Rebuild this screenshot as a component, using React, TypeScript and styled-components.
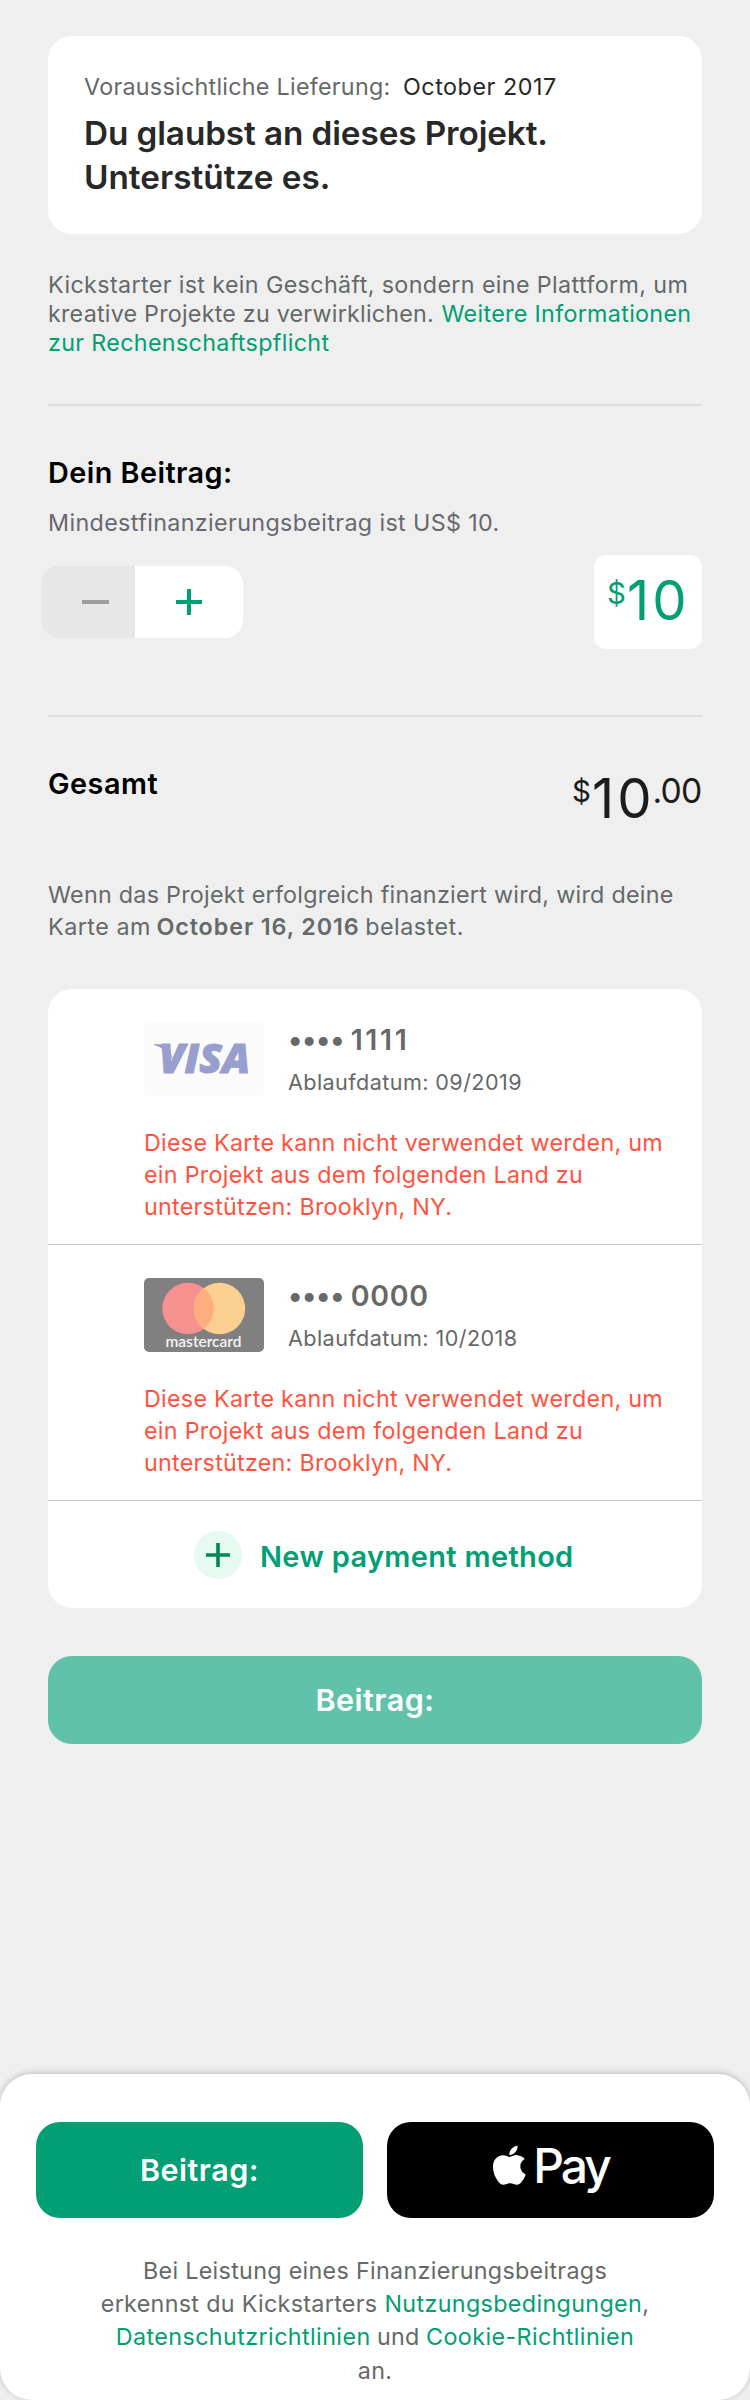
import React from 'react';
import styled, { createGlobalStyle } from 'styled-components';
import { FaApple } from 'react-icons/fa';

const color = {
  page: '#efefef',
  card: '#ffffff',
  text: '#656969',
  dark: '#282828',
  green: '#029e74',
  red: '#ff5340',
  rule: '#dcdddc',
  separator: '#c4c4c6',
};

const GlobalStyle = createGlobalStyle`
  *, *::before, *::after { box-sizing: border-box; }
  body {
    margin: 0;
    background: ${color.page};
    font-family: Inter, 'Liberation Sans', sans-serif;
    font-kerning: normal;
  }
`;

type TextProps = {
  $size?: number;
  $height?: number;
  $track?: number;
  $weight?: number;
  $color?: string;
};

const Screen = styled.div`
  width: 750px;
  height: 2400px;
  display: flex;
  flex-direction: column;
  justify-content: space-between;
  overflow: hidden;
`;

const Content = styled.main`
  padding: 36px 48px 0;
`;

const Line = styled.div<TextProps & { $center?: boolean; $gap?: number }>`
  display: flex;
  justify-content: ${(p) => (p.$center ? 'center' : 'flex-start')};
  gap: ${(p) => p.$gap ?? 0}px;
  white-space: nowrap;
  font-size: ${(p) => p.$size ?? 23.3}px;
  line-height: ${(p) => p.$height ?? 32}px;
  letter-spacing: ${(p) => p.$track ?? 0.3}px;
  font-weight: ${(p) => p.$weight ?? 400};
  color: ${(p) => p.$color ?? color.text};
`;

const Part = styled.span<{ $track?: number; $weight?: number; $color?: string }>`
  letter-spacing: ${(p) => p.$track ?? 0.3}px;
  font-weight: ${(p) => p.$weight ?? 400};
  color: ${(p) => p.$color ?? 'inherit'};
`;

const Link = styled.a<{ $track?: number }>`
  color: ${color.green};
  letter-spacing: ${(p) => p.$track ?? 0.3}px;
  text-decoration: none;
`;

const SummaryCard = styled.section`
  height: 198px;
  padding: 34px 36px 0;
  border-radius: 24px;
  background: ${color.card};
`;

const SummaryTitle = styled.h1`
  margin: 8px 0 0;
`;

const Disclaimer = styled.section`
  height: 170px;
  padding-top: 36px;
`;

const Divider = styled.hr`
  height: 2px;
  margin: 0;
  border: 0;
  background: ${color.rule};
`;

const PledgeSection = styled.section`
  height: 309px;
  padding-top: 48.5px;
`;

const Hint = styled.div`
  margin: 16px 0 16.5px;
`;

const PledgeRow = styled.div`
  display: flex;
  align-items: center;
  justify-content: space-between;
  height: 94px;
  margin-left: -7px;
`;

const Stepper = styled.div`
  display: flex;
  width: 202px;
  height: 72px;
  border-radius: 18px;
  overflow: hidden;
`;

const StepButton = styled.button<{ $off?: boolean }>`
  display: flex;
  align-items: center;
  flex: ${(p) => (p.$off ? '0 0 94px' : '1')};
  padding: 0 0 0 41px;
  border: 0;
  background: ${(p) => (p.$off ? '#e7e7e7' : color.card)};
  color: ${(p) => (p.$off ? '#9b9e9e' : color.green)};
`;

const AmountBox = styled.div`
  display: flex;
  align-items: flex-start;
  width: 108px;
  height: 94px;
  padding: 18px 0 0 13px;
  border-radius: 12px;
  background: ${color.card};
  color: ${color.green};
`;

const Currency = styled.span`
  width: 20px;
  padding-top: 5px;
  font-size: 29.5px;
  line-height: 30px;
`;

const Whole = styled.span`
  width: 60.5px;
  font-size: 54.5px;
  line-height: 54px;
  letter-spacing: 3px;
`;

const Cents = styled.span`
  padding-top: 2.5px;
  font-size: 33.7px;
  line-height: 34px;
  letter-spacing: -0.8px;
`;

const TotalSection = styled.section`
  display: flex;
  justify-content: space-between;
  height: 161.5px;
  padding-top: 48px;
`;

const TotalAmount = styled.div`
  display: flex;
  align-items: flex-start;
  width: 130px;
  padding-top: 6px;
  color: #1c1c1c;
`;

const ChargeNote = styled.section`
  height: 110.5px;
`;

const PaymentCard = styled.section`
  height: 619px;
  border-radius: 24px;
  background: ${color.card};
`;

const PaymentItem = styled.article`
  height: 256px;
  padding: 33px 0 0 96px;
  border-bottom: 1px solid ${color.separator};
`;

const CardHeader = styled.header`
  display: flex;
  gap: 24px;
  height: 74px;
  margin-bottom: 30.5px;
`;

const CardNumber = styled.div`
  margin-bottom: 10px;
`;

const AddMethod = styled.button`
  display: flex;
  gap: 18px;
  width: 100%;
  height: 107px;
  padding: 30px 0 0 146px;
  border: 0;
  background: none;
  font-family: inherit;
`;

const AddBadge = styled.span`
  display: flex;
  align-items: center;
  justify-content: center;
  width: 48px;
  height: 48px;
  border-radius: 50%;
  background: #e6faf1;
  color: #028858;
`;

const AddLabel = styled.span`
  padding-top: 8px;
`;

const ActionButton = styled.button<{ $height: number; $bg: string; $weight: number; $track: number }>`
  display: flex;
  align-items: center;
  justify-content: center;
  flex: 1;
  width: 100%;
  height: ${(p) => p.$height}px;
  padding: 0 0 2px;
  border: 0;
  border-radius: 24px;
  background: ${(p) => p.$bg};
  color: #fff;
  font-family: inherit;
  font-size: 30.5px;
  font-weight: ${(p) => p.$weight};
  letter-spacing: ${(p) => p.$track}px;
`;

const InlineAction = styled.div`
  display: flex;
  margin-top: 48px;
`;

const Footer = styled.footer`
  height: 326px;
  padding: 48px 36px 0;
  border-radius: 32px;
  background: ${color.card};
  box-shadow: 0 -1px 6px rgba(0, 0, 0, 0.22);
`;

const FooterActions = styled.div`
  display: flex;
  gap: 24px;
  margin-bottom: 35.5px;
`;

const PayMark = styled.span`
  display: flex;
  align-items: center;
  margin: -8px 5px 0 0;
  svg { display: block; }
`;

const PayText = styled.span`
  margin-left: 1.5px;
  font-size: 48px;
  font-weight: 500;
  letter-spacing: -3px;
`;

function Plus({ size, stroke }: { size: number; stroke: number }) {
  const c = size / 2;
  return (
    <svg width={size} height={size} stroke="currentColor" strokeWidth={stroke}>
      <path d={`M0 ${c}H${size}M${c} 0V${size}`} />
    </svg>
  );
}

function Minus() {
  return (
    <svg width="27" height="4">
      <rect width="27" height="4" fill="currentColor" />
    </svg>
  );
}

function VisaLogo() {
  return (
    <svg width="120" height="74" viewBox="0 0 120 74">
      <rect width="120" height="74" rx="5" fill="#fbfbfb" />
      <g fill="#989ecd">
        <path d="M10 22.2H22.5Q25 22.4 25.8 25L28.5 38Q22 26 10 23Z" />
        <text
          x="15"
          y="51.2"
          fontFamily="'Open Sans', sans-serif"
          fontSize="40"
          fontWeight="800"
          fontStyle="italic"
          stroke="#989ecd"
          strokeWidth="1"
          textLength="91"
          lengthAdjust="spacingAndGlyphs"
        >
          VISA
        </text>
      </g>
    </svg>
  );
}

function MastercardLogo() {
  return (
    <svg width="120" height="74" viewBox="0 0 120 74">
      <defs>
        <clipPath id="left-disc">
          <circle cx="44" cy="30.5" r="25.7" />
        </clipPath>
      </defs>
      <rect width="120" height="74" rx="5" fill="#808080" />
      <circle cx="44" cy="30.5" r="25.7" fill="#f6918f" />
      <circle cx="75.5" cy="30.5" r="25.7" fill="#fbcf8f" />
      <circle cx="75.5" cy="30.5" r="25.7" fill="#ffad7e" clipPath="url(#left-disc)" />
      <text
        x="21.5"
        y="69"
        fill="#f4f4f4"
        fontFamily="Lato, sans-serif"
        fontSize="15.5"
        fontWeight="600"
        textLength="76"
      >
        mastercard
      </text>
    </svg>
  );
}

type SavedCardProps = {
  logo: React.ReactNode;
  digits: string;
  digitTrack: number;
  expiry: string;
  expiryTrack: number;
};

function SavedCard({ logo, digits, digitTrack, expiry, expiryTrack }: SavedCardProps) {
  return (
    <PaymentItem>
      <CardHeader>
        {logo}
        <div>
          <CardNumber>
            <Line $size={28.5} $height={36} $weight={600} $gap={6.5}>
              <Part $weight={600} $track={-0.3}>••••</Part>
              <Part $weight={600} $track={digitTrack}>{digits}</Part>
            </Line>
          </CardNumber>
          <Line $size={21.6} $height={28} $track={expiryTrack}>Ablaufdatum: {expiry}</Line>
        </div>
      </CardHeader>
      <Line $color={color.red} $track={0.27}>Diese Karte kann nicht verwendet werden, um</Line>
      <Line $color={color.red} $track={0.29}>ein Projekt aus dem folgenden Land zu</Line>
      <Line $color={color.red} $track={0.26}>unterstützen: Brooklyn, NY.</Line>
    </PaymentItem>
  );
}

export default function App() {
  return (
    <Screen>
      <GlobalStyle />
      <Content>
        <SummaryCard>
          <Line $height={33} $gap={12.5}>
            <Part $track={0.27}>Voraussichtliche Lieferung:</Part>
            <Part $track={0.54} $color={color.dark}>October 2017</Part>
          </Line>
          <SummaryTitle>
            <Line $size={33.3} $height={44} $weight={600} $track={-0.1} $color={color.dark}>
              Du glaubst an dieses Projekt.
            </Line>
            <Line $size={33.3} $height={44} $weight={600} $track={0} $color={color.dark}>
              Unterstütze es.
            </Line>
          </SummaryTitle>
        </SummaryCard>

        <Disclaimer>
          <Line $height={29} $track={0.365}>Kickstarter ist kein Geschäft, sondern eine Plattform, um</Line>
          <Line $height={29} $gap={7.5}>
            <Part $track={0.22}>kreative Projekte zu verwirklichen.</Part>
            <Link $track={0.31}>Weitere Informationen</Link>
          </Line>
          <Line $height={29}>
            <Link $track={0.33}>zur Rechenschaftspflicht</Link>
          </Line>
        </Disclaimer>

        <Divider />

        <PledgeSection>
          <Line $size={28.8} $height={36} $weight={600} $track={0.45} $color="#000">Dein Beitrag:</Line>
          <Hint>
            <Line $track={0.36} $color="#68686f">Mindestfinanzierungsbeitrag ist US$ 10.</Line>
          </Hint>
          <PledgeRow>
            <Stepper>
              <StepButton $off aria-label="Weniger"><Minus /></StepButton>
              <StepButton aria-label="Mehr"><Plus size={26} stroke={4} /></StepButton>
            </Stepper>
            <AmountBox>
              <Currency>$</Currency>
              <Whole>10</Whole>
            </AmountBox>
          </PledgeRow>
        </PledgeSection>

        <Divider />

        <TotalSection>
          <Line $size={28.8} $height={37} $weight={600} $track={0.5} $color="#000">Gesamt</Line>
          <TotalAmount>
            <Currency>$</Currency>
            <Whole>10</Whole>
            <Cents>.00</Cents>
          </TotalAmount>
        </TotalSection>

        <ChargeNote>
          <Line $track={0.27}>Wenn das Projekt erfolgreich finanziert wird, wird deine</Line>
          <Line $gap={5.5}>
            <Part $track={0.5}>Karte am</Part>
            <Part $track={0.92} $weight={600}>October 16, 2016</Part>
            <Part $track={0.5}>belastet.</Part>
          </Line>
        </ChargeNote>

        <PaymentCard>
          <SavedCard logo={<VisaLogo />} digits="1111" digitTrack={2.6} expiry="09/2019" expiryTrack={0.41} />
          <SavedCard logo={<MastercardLogo />} digits="0000" digitTrack={0.7} expiry="10/2018" expiryTrack={0.42} />
          <AddMethod>
            <AddBadge><Plus size={24} stroke={3.6} /></AddBadge>
            <AddLabel>
              <Line $size={29} $height={36} $weight={600} $track={0.33} $color={color.green}>
                New payment method
              </Line>
            </AddLabel>
          </AddMethod>
        </PaymentCard>

        <InlineAction>
          <ActionButton $height={88} $bg="#5fc2a9" $weight={600} $track={0.5}>Beitrag:</ActionButton>
        </InlineAction>
      </Content>

      <Footer>
        <FooterActions>
          <ActionButton $height={96} $bg={color.green} $weight={600} $track={0.5}>Beitrag:</ActionButton>
          <ActionButton $height={96} $bg="#000" $weight={400} $track={0} aria-label="Apple Pay">
            <PayMark>
              <FaApple size={44.6} />
              <PayText>Pay</PayText>
            </PayMark>
          </ActionButton>
        </FooterActions>
        <Line $center $height={33.3} $track={0.31}>Bei Leistung eines Finanzierungsbeitrags</Line>
        <Line $center $height={33.3} $gap={7}>
          <Part $track={0.31}>erkennst du Kickstarters</Part>
          <span>
            <Link $track={0.36}>Nutzungsbedingungen</Link>,
          </span>
        </Line>
        <Line $center $height={33.3} $gap={6.5}>
          <Link $track={0.41}>Datenschutzrichtlinien</Link>
          <Part $track={0.23}>und</Part>
          <Link $track={0.394}>Cookie-Richtlinien</Link>
        </Line>
        <Line $center $height={35.6}>an.</Line>
      </Footer>
    </Screen>
  );
}
